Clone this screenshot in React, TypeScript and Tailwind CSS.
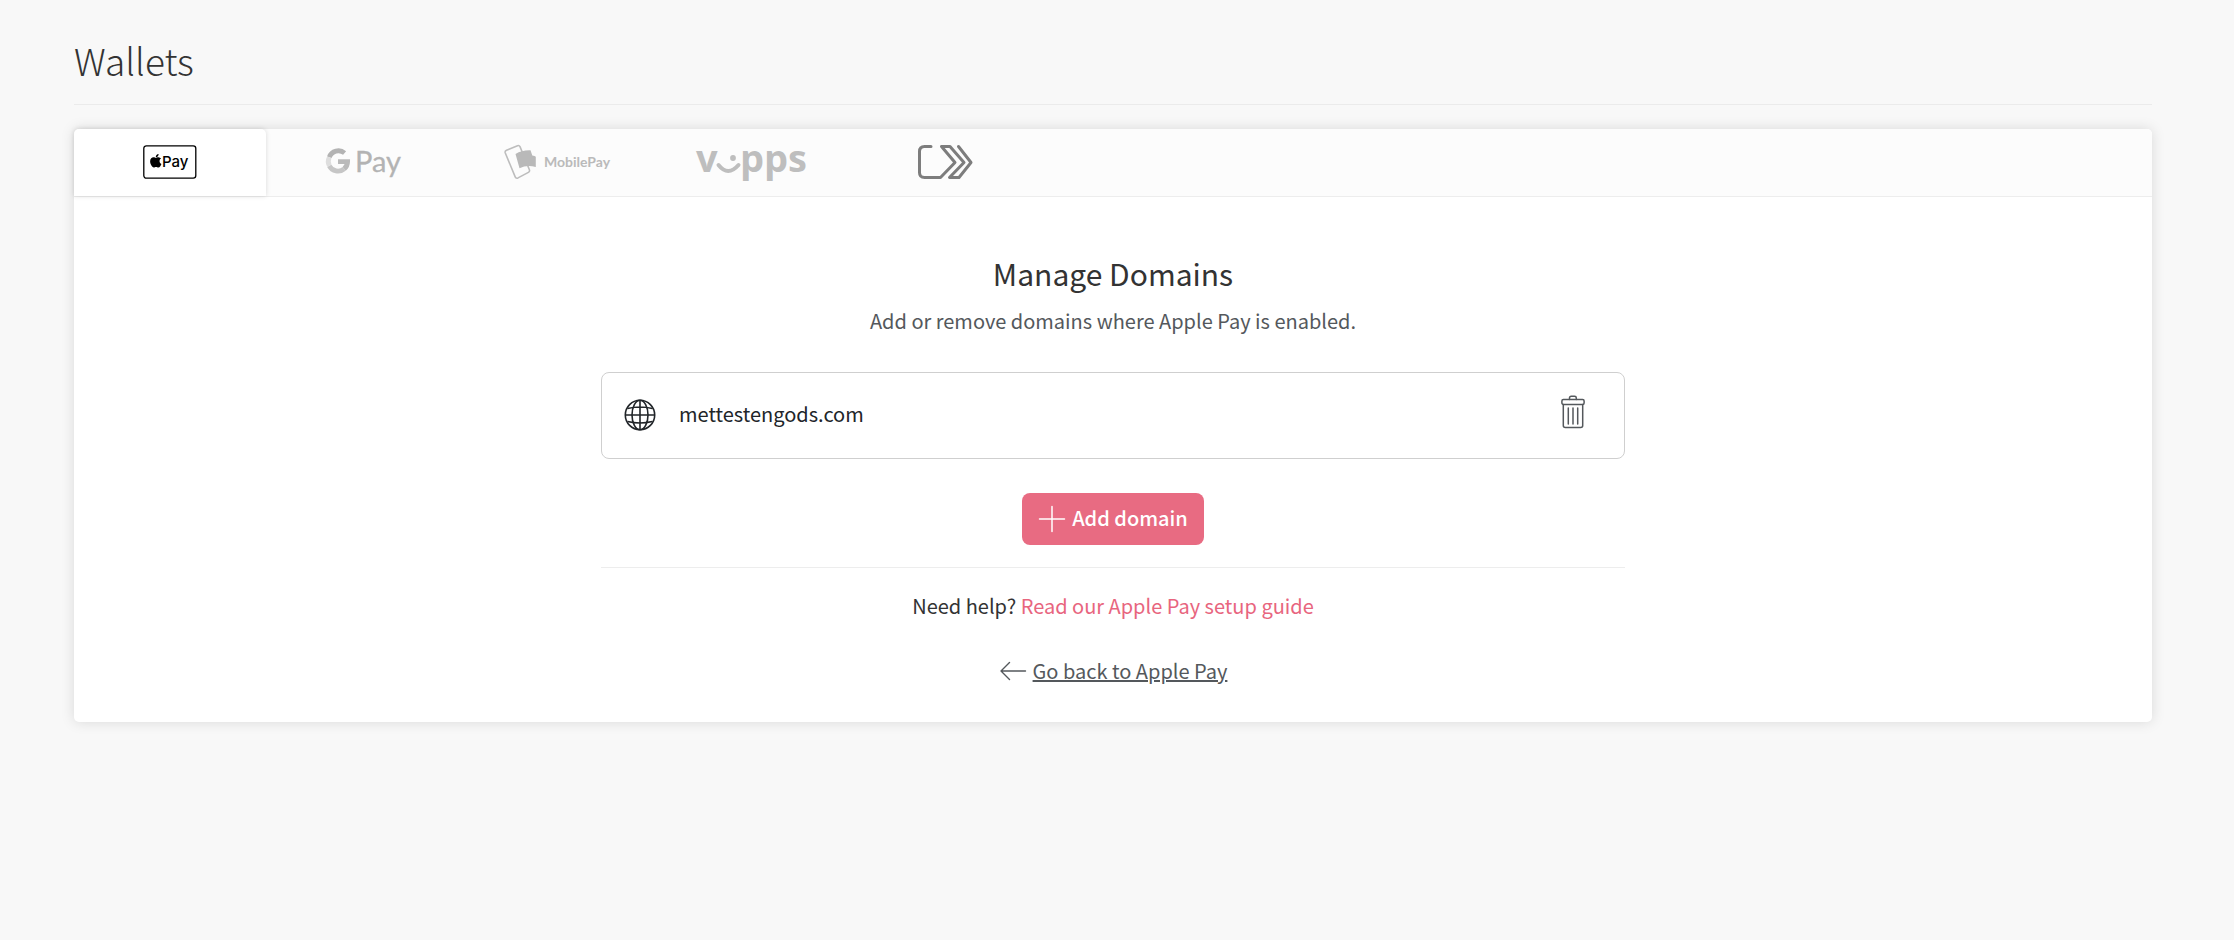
import type { ReactNode } from "react";

function ApplePayLogo() {
  return (
    <svg width="54" height="34" viewBox="0 0 54 34" role="img" aria-label="Apple Pay">
      <rect x="0.8" y="0.8" width="52" height="32.4" rx="2.6" fill="#fff" stroke="#000" strokeWidth="1.3" />
      <g transform="translate(7 10) scale(0.03)">
        <path d="M318.7 204.7c-.2-36.7 16.4-64.4 50-84.8-18.8-26.9-47.2-41.7-84.7-44.6-35.500-2.800-74.300 20.700-88.500 20.700-15 0-49.400-19.700-76.400-19.700C63.300 77.200 4 120.800 4 209.500q0 39.300 14.400 81.200c12.800 36.700 59 126.700 107.200 125.200 25.200-.6 43-17.900 75.800-17.900 31.800 0 48.300 17.900 76.400 17.900 48.600-.7 90.400-82.500 102.600-119.300-65.200-30.700-61.700-90-61.700-91.900zm-56.600-164.200c27.300-32.400 24.800-61.900 24-72.500-24.100 1.400-52 16.400-67.900 34.900-17.500 19.800-27.800 44.300-25.600 71.900 26.100 2 49.900-11.400 69.500-34.300z" />
      </g>
      <text x="19" y="22" fontFamily="Inter, sans-serif" fontSize="15" fontWeight="500">
        Pay
      </text>
    </svg>
  );
}

function GooglePayLogo() {
  return (
    <svg className="overflow-visible" width="76" height="36" viewBox="0 0 76 36" role="img" aria-label="Google Pay">
      <g fill="none" strokeWidth="4.8">
        <path d="M18.600 9A9.700 9.700 0 0 0 3.300 13.200" stroke="#b3b3b3" />
        <path d="M3.300 13.200A9.700 9.700 0 0 0 3.300 21.800" stroke="#dedede" />
        <path d="M3.300 21.800A9.700 9.700 0 0 0 18.200 24.800" stroke="#c6c6c6" />
        <path d="M18.200 24.800A9.700 9.700 0 0 0 21.600 17.600H12" stroke="#bababa" />
      </g>
      <text x="29" y="28" fill="#b3b3b3" stroke="#b3b3b3" strokeWidth="0.3" fontFamily="Lato, sans-serif" fontSize="29">
        Pay
      </text>
    </svg>
  );
}

function MobilePayLogo() {
  return (
    <svg className="overflow-visible" width="108" height="36" viewBox="0 0 108 36" role="img" aria-label="MobilePay">
      <path
        d="M2.500 6.200L13.500 1.700Q15.200 1.100 16 2.700L25.400 25.800Q26 27.600 24.400 28.400L14 33.900Q12 34.800 11.200 32.900L1.200 8.700Q.7 7 2.500 6.200Z"
        fill="none"
        stroke="#bdbdbd"
        strokeWidth="1.6"
      />
      <path
        d="M11.500 10Q18 6 26.500 6.300L28.300 11.500Q31 12 31.800 12.700V23Q23 20.500 15.500 24.200Z"
        fill="#b9b9b9"
      />
      <text x="40" y="23" fill="#bababa" fontFamily="Lato, sans-serif" fontSize="14" fontWeight="700">
        MobilePay
      </text>
    </svg>
  );
}

function VippsLogo() {
  return (
    <svg className="overflow-visible" width="112" height="40" viewBox="0 0 112 40" role="img" aria-label="Vipps" fill="#bebebe">
      <g fontFamily="'Open Sans', sans-serif" fontSize="38" fontWeight="700">
        <text x="0" y="30">
          v
        </text>
        <text x="44" y="30">
          pps
        </text>
      </g>
      <circle cx="37" cy="16" r="2.9" />
      <path d="M22.500 23Q32 35 42.500 23" fill="none" stroke="#bebebe" strokeWidth="4" strokeLinecap="round" />
    </svg>
  );
}

function ClickToPayLogo() {
  return (
    <svg width="58" height="36" viewBox="0 0 58 36" role="img" aria-label="Click to Pay">
      <path
        d="M14 2.500H7.500Q2.500 2.500 2.500 7.500V28.500Q2.500 33.500 7.500 33.500H23.500L38 18.500L24.500 2.500H33L47 18.500L32.500 33.500H42L54 18.500L41.500 2.500"
        fill="none"
        stroke="#7d7d7d"
        strokeWidth="3"
        strokeLinecap="round"
        strokeLinejoin="round"
      />
    </svg>
  );
}

function GlobeIcon() {
  return (
    <svg className="shrink-0" width="32" height="32" viewBox="0 0 32 32" fill="none" stroke="#212529" strokeWidth="1.6" aria-hidden="true">
      <circle cx="16" cy="16" r="14.7" />
      <ellipse cx="16" cy="16" rx="8" ry="14.7" />
      <path d="M16 1.300V30.700M1.300 16H30.700M3.600 9.500Q16 6.500 28.400 9.500M3.600 22.500Q16 25.500 28.400 22.500" />
    </svg>
  );
}

function TrashIcon() {
  return (
    <svg width="24" height="34" viewBox="0 0 24 34" fill="none" stroke="#54585c" strokeWidth="1.5" strokeLinejoin="round" strokeLinecap="round" aria-hidden="true">
      <path d="M8.500 4.500V3Q8.500 1.300 10.200 1.300H13.600Q15.300 1.300 15.300 3V4.500" />
      <rect x="0.9" y="4.5" width="22.2" height="5" rx="1.5" />
      <path d="M2.300 9.500V30.500Q2.300 32.500 4.300 32.500H19.700Q21.700 32.500 21.700 30.500V9.500M7.300 13V29M12 13V29M16.700 13V29" />
    </svg>
  );
}

const tabs: { id: string; logo: ReactNode }[] = [
  { id: "apple-pay", logo: <ApplePayLogo /> },
  { id: "google-pay", logo: <GooglePayLogo /> },
  { id: "mobilepay", logo: <MobilePayLogo /> },
  { id: "vipps", logo: <VippsLogo /> },
  { id: "click-to-pay", logo: <ClickToPayLogo /> },
];

const domains = ["mettestengods.com"];

export default function App() {
  return (
    <div className="min-h-screen bg-[#f8f8f8] pt-9 pr-[82px] pb-12 pl-[74px] font-['Noto_Sans_CJK_SC',sans-serif] text-[20px] leading-8 text-[#333333]">
      <header className="border-b border-[#ebebeb] pb-5">
        <h1 className="text-[37px] leading-[48px] font-light">Wallets</h1>
      </header>

      <main className="mt-6 rounded-[5px] bg-white shadow-[0_0_14px_rgba(0,0,0,0.13)]">
        <div role="tablist" className="flex gap-0.5 rounded-t-[5px] border-b border-[#ededed] bg-[#fcfcfc]">
          {tabs.map((tab, i) => (
            <button
              key={tab.id}
              type="button"
              role="tab"
              aria-selected={i === 0}
              className={
                i === 0
                  ? "flex h-[67px] w-48 items-center justify-center rounded-t-[5px] bg-white pb-0.5 shadow-[0_0_5px_rgba(0,0,0,0.14)]"
                  : "flex h-[67px] w-48 items-center justify-center pb-0.5"
              }
            >
              {tab.logo}
            </button>
          ))}
        </div>

        <section role="tabpanel" className="mx-auto flex max-w-5xl flex-col items-center pt-[54px] pb-[35px]">
          <h2 className="text-[30px] leading-[44px] font-normal">Manage Domains</h2>
          <p className="mt-[10px] text-[#54585c]">Add or remove domains where Apple Pay is enabled.</p>

          <ul className="mt-[35px] flex w-full flex-col gap-4">
            {domains.map((domain) => (
              <li key={domain} className="flex h-[87px] items-center rounded-lg border border-[#cfcfcf] pr-[39px] pb-0.5 pl-[22px] text-[#212529]">
                <GlobeIcon />
                <span className="ml-[23px] flex-1 pb-0.5">{domain}</span>
                <button type="button" aria-label={`Remove ${domain}`} className="mb-[6px]">
                  <TrashIcon />
                </button>
              </li>
            ))}
          </ul>

          <button type="button" className="mt-[34px] flex h-[52px] items-center gap-[6px] rounded-lg bg-[#e86b82] px-4 font-medium text-white">
            <svg width="28" height="28" viewBox="0 0 28 28" stroke="currentColor" strokeWidth="1.5" strokeLinecap="round" aria-hidden="true">
              <path d="M14 1.500V26.500M1.500 14H26.500" />
            </svg>
            <span className="pb-0.5">Add domain</span>
          </button>

          <div className="mt-[22px] w-full border-t border-[#ededed] pt-[22px] text-center">
            Need help?{" "}
            <a href="#guide" className="text-[#e8657e]">
              Read our Apple Pay setup guide
            </a>
          </div>

          <a href="#apple-pay" className="mt-[33px] flex items-center gap-[6px] text-[#54585c]">
            <svg width="28" height="20" viewBox="0 0 28 20" fill="none" stroke="currentColor" strokeWidth="1.4" strokeLinecap="round" strokeLinejoin="round" aria-hidden="true">
              <path d="M10.500 1.500L2 10L10.500 18.500M2 10H26.500" />
            </svg>
            <span className="underline">Go back to Apple Pay</span>
          </a>
        </section>
      </main>
    </div>
  );
}
